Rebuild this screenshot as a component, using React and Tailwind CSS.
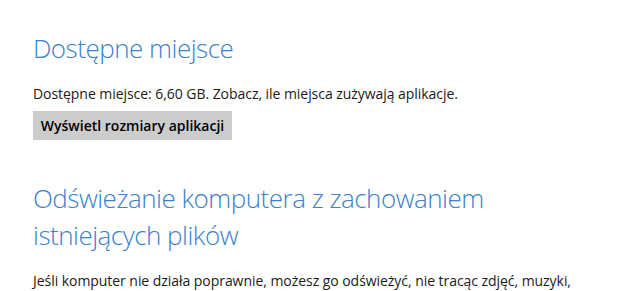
export default function App() {
  return (
    <div
      className="w-[630px] h-[291px] overflow-hidden bg-white pl-[33px] pt-[30px]"
      style={{ fontFamily: '"Open Sans", "Noto Sans", sans-serif' }}
    >
      <h1 className="text-[26px] leading-[36px] font-light text-[#3b82c8] tracking-[-0.5px]">
        Dostępne miejsce
      </h1>
      <p className="mt-[18px] text-[14px] leading-[19px] text-[#1a1a1a] tracking-[-0.05px]">
        Dostępne miejsce: 6,60 GB. Zobacz, ile miejsca zużywają aplikacje.
      </p>
      <button className="mt-[8px] h-[29px] w-[199px] bg-[#cccccc] text-[14px] font-semibold text-black">
        Wyświetl rozmiary aplikacji
      </button>
      <h2 className="mt-[40px] w-[480px] text-[26px] leading-[37px] font-light text-[#3b82c8] tracking-[-0.5px]">
        Odświeżanie komputera z zachowaniem istniejących plików
      </h2>
      <p className="mt-[17px] text-[14px] leading-[19px] text-[#1a1a1a] tracking-[-0.05px]">
        Jeśli komputer nie działa poprawnie, możesz go odświeżyć, nie tracąc zdjęć, muzyki,
      </p>
    </div>
  );
}
